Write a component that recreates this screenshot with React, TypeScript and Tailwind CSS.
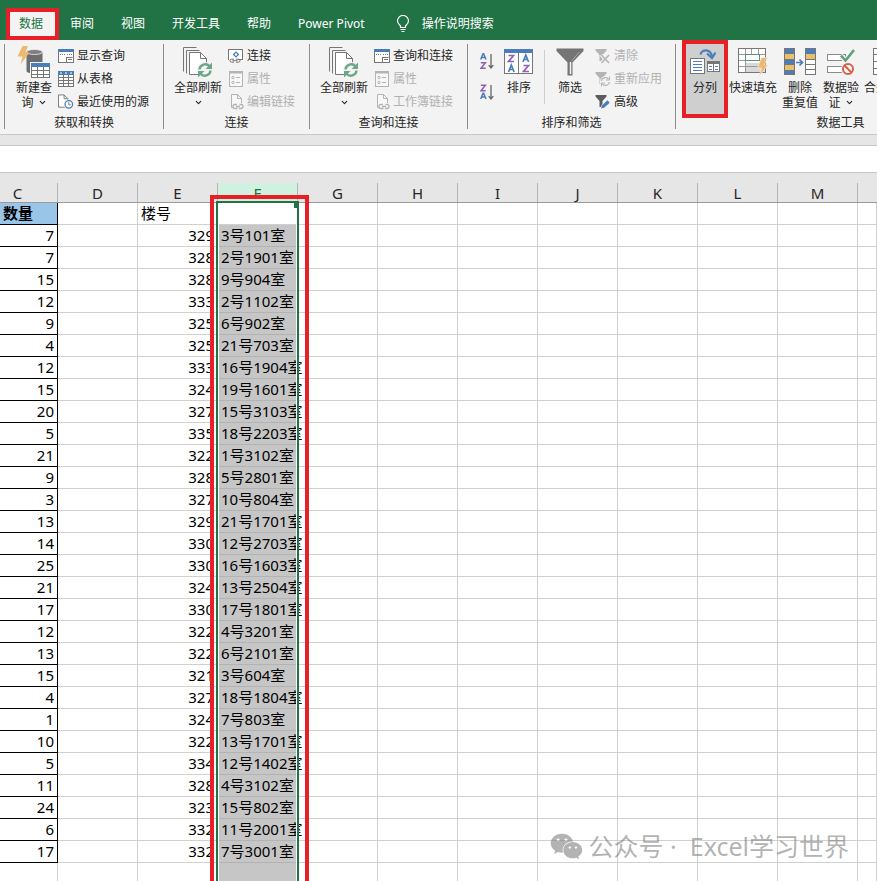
import React from 'react';
import { ChevronDown } from 'lucide-react';
import { FaWeixin } from 'react-icons/fa';

const BLUE = '#4a7ebb';
const GRAY = '#767676';
const MUTED = '#b4b4b4';

const TABS = ['审阅', '视图', '开发工具', '帮助', 'Power Pivot'];

const COLUMNS = ['C', 'D', 'E', 'F', 'G', 'H', 'I', 'J', 'K', 'L', 'M'];
const EMPTY_COLUMNS = ['G', 'H', 'I', 'J', 'K', 'L', 'M'];

const ROWS: [number, number, string][] = [
  [7, 329, '3号101室'],
  [7, 328, '2号1901室'],
  [15, 328, '9号904室'],
  [12, 333, '2号1102室'],
  [9, 325, '6号902室'],
  [4, 325, '21号703室'],
  [12, 333, '16号1904室'],
  [15, 324, '19号1601室'],
  [20, 327, '15号3103室'],
  [5, 335, '18号2203室'],
  [21, 322, '1号3102室'],
  [9, 328, '5号2801室'],
  [3, 327, '10号804室'],
  [13, 329, '21号1701室'],
  [14, 330, '12号2703室'],
  [25, 330, '16号1603室'],
  [21, 324, '13号2504室'],
  [17, 330, '17号1801室'],
  [12, 322, '4号3201室'],
  [13, 322, '6号2101室'],
  [15, 321, '3号604室'],
  [4, 327, '18号1804室'],
  [1, 324, '7号803室'],
  [10, 322, '13号1701室'],
  [5, 334, '12号1402室'],
  [11, 328, '4号3102室'],
  [24, 323, '15号802室'],
  [6, 332, '11号2001室'],
  [17, 332, '7号3001室'],
];

/* ---------- icons ---------- */

const BulbIcon = () => (
  <svg width="14" height="18" viewBox="0 0 14 18" fill="none" stroke="#fff" strokeWidth="1.2">
    <path d="M4.5 12.5V11C3 9.5 1.5 8.300 1.500 6a5.500 5.500 0 0 1 11 0c0 2.300-1.500 3.500-3 5v1.500z" />
    <path d="M4.500 14.500h5M5.500 16.500h3" />
  </svg>
);

const NewQueryIcon = () => (
  <svg width="36" height="34" viewBox="0 0 36 34">
    <path d="M10.500 7v19c0 1.500 3.500 2.500 8 2.500s8-1 8-2.500V7z" fill="#6d6d6d" />
    <ellipse cx="18.500" cy="7" rx="8" ry="2.500" fill="#7e7e7e" stroke="#f3f3f3" strokeWidth="0.800" />
    <path d="M6.500 1H12L9.500 7.500h4L4.500 19.500l2-8h-5z" fill="#ebb970" />
    <rect x="14" y="17" width="22" height="17" fill="#f3f3f3" />
    <rect x="15.500" y="18.500" width="18" height="14" fill="#fff" stroke={GRAY} />
    <rect x="15" y="18" width="19" height="4" fill={BLUE} />
    <path d="M21.500 22v10M27.500 22v10M16 25.500h17M16 29.500h17" stroke={GRAY} />
  </svg>
);

const PaneIcon = () => (
  <svg width="16" height="14" viewBox="0 0 16 14">
    <rect x="0.500" y="0.500" width="15" height="13" fill="#fff" stroke={GRAY} />
    <rect width="16" height="3" fill={BLUE} />
    <path d="M2 5.500h5M9 5.500h5" stroke={GRAY} strokeDasharray="1 1" />
    <path d="M8.500 8.500h6M8.500 8v5M10 10.500h4" stroke={GRAY} />
  </svg>
);

const TableIcon = () => (
  <svg width="16" height="16" viewBox="0 0 16 16">
    <rect x="0.500" y="0.500" width="15" height="15" fill="#fff" stroke={GRAY} />
    <rect width="16" height="4" fill={BLUE} />
    <path d="M2 2h2M7 2h2M12 2h2" stroke="#fff" />
    <path d="M5.500 4v11M10.500 4v11M1 6.500h14M1 9.500h14M1 12.500h14" stroke={GRAY} />
  </svg>
);

const RecentIcon = () => (
  <svg width="17" height="16" viewBox="0 0 17 16">
    <path d="M0.500 0.500h6l4 4v9h-10z" fill="#fff" stroke={GRAY} />
    <path d="M6.500 0.500v4h4" fill="none" stroke={GRAY} />
    <circle cx="11.500" cy="10.500" r="5.500" fill="#f3f3f3" />
    <circle cx="11.500" cy="10.500" r="4" fill="#fff" stroke={BLUE} strokeWidth="1.300" />
    <path d="M11.500 8v3h2.200" fill="none" stroke={GRAY} />
  </svg>
);

const RefreshAllIcon = () => (
  <svg width="30" height="31" viewBox="0 0 30 31" fill="none">
    <path d="M0.500 24.500v-24h13M3.500 26.500v-23h13" stroke={GRAY} />
    <path d="M6.500 5.500h11l6 6v16h-17z" fill="#fff" stroke={GRAY} />
    <path d="M17.500 5.500v6h6" stroke={GRAY} />
    <circle cx="22" cy="23" r="8" fill="#f3f3f3" />
    <path d="M16.500 22.500a5.700 5.700 0 0 1 10-3.200M27.500 23.500a5.700 5.700 0 0 1-10 3.200" stroke="#6ba58a" strokeWidth="2.400" />
    <path d="M29 15.500v6.500h-6.500zM15 30.500V24h6.500z" fill="#6ba58a" />
  </svg>
);

const ConnectionIcon = () => (
  <svg width="16" height="14" viewBox="0 0 16 14" fill="none">
    <rect x="0.500" y="0.500" width="14" height="10" fill="#fff" stroke={GRAY} />
    <path d="M8 2.200l3.300 3.300L8 8.800 4.700 5.500z" fill={BLUE} />
    <circle cx="8" cy="5.500" r="1.200" fill="#fff" />
    <path d="M1 11h9" stroke="#f3f3f3" strokeWidth="2" />
    <path d="M6 13.200H3.500a1.500 1.500 0 0 1 0-3H6M8 10.200h2.500a1.500 1.500 0 0 1 0 3H8M4.500 11.700h5" stroke={GRAY} />
  </svg>
);

const PropertiesIcon = () => (
  <svg width="16" height="16" viewBox="0 0 16 16" fill="none">
    <rect x="1.500" y="0.500" width="13" height="15" fill="#f7f7f7" stroke={MUTED} />
    <path d="M1 1.500h14" stroke={MUTED} strokeWidth="2" />
    <circle cx="5" cy="6.500" r="1.200" stroke={MUTED} />
    <circle cx="5" cy="11.500" r="1.200" stroke={MUTED} />
    <path d="M8 6.500h4M8 11.500h4" stroke={MUTED} />
  </svg>
);

const DocLinkIcon = () => (
  <svg width="16" height="16" viewBox="0 0 16 16" fill="none">
    <path d="M5 13.500H3.500v-13h6l4 4V9" fill="#f7f7f7" stroke={MUTED} />
    <path d="M9.500 0.500v4h4" stroke={MUTED} />
    <path d="M9.500 14.500H7a2 2 0 0 1 0-4h2M11.500 10.500H13a2 2 0 0 1 0 4h-2M8 12.500h4" stroke={MUTED} strokeWidth="1.300" />
  </svg>
);

const SortIcon = ({ desc = false }: { desc?: boolean }) => {
  const a = { d: 'M0.700 6.500L3 0.700h0.600L6 6.500M1.600 4.500h3.500', stroke: BLUE };
  const z = { d: 'M0.800 1.200h4.600L1 6.800h4.700', stroke: '#9161b5' };
  const [top, bottom] = desc ? [z, a] : [a, z];
  return (
    <svg width="14" height="17" viewBox="0 0 14 17" fill="none" strokeWidth="1.500">
      <path {...top} />
      <path {...bottom} transform="translate(0 8.500)" />
      <path d="M11 1v14M8.700 12.200L11 15l2.300-2.800" stroke="#666" strokeWidth="1.300" />
    </svg>
  );
};

const SortDialogIcon = () => (
  <svg width="30" height="26" viewBox="0 0 30 26" fill="none">
    <rect x="0.500" y="0.500" width="28" height="24" fill="#fff" stroke={GRAY} />
    <rect width="29" height="4" fill={BLUE} />
    <path d="M14.500 4v21" stroke={GRAY} />
    <g strokeWidth="1.700">
      <path d="M4.500 6.500h5l-5 6h5.500M19.500 16.500h5l-5 6H25" stroke="#9161b5" />
      <path d="M4.500 23l2.800-7 2.800 7M5.500 20.500h3.600M19 13l2.800-7 2.800 7M20 10.500h3.600" stroke={BLUE} />
    </g>
  </svg>
);

const FilterIcon = () => (
  <svg width="30" height="28" viewBox="-1 0 30 28">
    <path d="M0.500 0.500h27v2.500L16.500 14.500v13h-5v-13L0.500 3z" fill="#757575" />
    <path d="M14.500 14v12" stroke="#f3f3f3" strokeWidth="1.500" />
    <path d="M23.500 4L15.500 13" stroke="#a5a5a5" />
  </svg>
);

const SmallFilterIcon = ({ kind }: { kind: 'clear' | 'reapply' | 'advanced' }) => (
  <svg width="16" height="16" viewBox="0 0 16 16" fill="none">
    <path d="M0.500 1h11v1.500l-4 4.500v6h-3V7l-4-4.500z" fill={kind === 'advanced' ? '#5c5c5c' : MUTED} />
    {kind === 'clear' && (
      <>
        <path d="M6 7l8 8M14 7l-8 8" stroke="#f3f3f3" strokeWidth="3" />
        <path d="M6.500 7l7.500 8M14 7l-7.500 8" stroke={MUTED} strokeWidth="1.500" />
      </>
    )}
    {kind === 'reapply' && (
      <>
        <circle cx="10.500" cy="10.500" r="5.500" fill="#f3f3f3" />
        <path d="M6.500 10a4 4 0 0 1 7-2M14.500 11a4 4 0 0 1-7 2" stroke={MUTED} strokeWidth="1.300" />
        <path d="M14.500 5.500v3.500H11M6.500 15.500V12H10" stroke={MUTED} />
      </>
    )}
    {kind === 'advanced' && (
      <>
        <path d="M5 15l1.500-4L12 5.500 15 8.500 9 14z" fill="#f3f3f3" />
        <path d="M6 14.500l1-3.200 5.500-5 2.200 2.400-5.500 5z" fill={BLUE} />
      </>
    )}
  </svg>
);

const TextToColumnsIcon = () => (
  <svg width="32" height="28" viewBox="0 0 32 28" fill="none">
    <path d="M11.500 6.500c1-5.500 10.500-6.500 11.500 2.500" stroke={BLUE} strokeWidth="2.200" />
    <path d="M18 5.500l5 4.500L26.500 4.500" stroke={BLUE} strokeWidth="2.200" />
    <rect x="1.500" y="10.500" width="14" height="15" fill="#fff" stroke={GRAY} />
    <path d="M4 13.500h9M4 16.500h9M4 19.500h9M4 22.500h9" stroke={BLUE} />
    <rect x="18.500" y="13.500" width="12" height="10" fill="#fff" stroke={GRAY} />
    <rect x="18" y="13" width="13" height="3" fill={GRAY} />
    <path d="M24.500 16v7" stroke={GRAY} />
    <path d="M20 18.500h3M26 18.500h3M20 21.500h3M26 21.500h3" stroke={BLUE} />
  </svg>
);

const FlashFillIcon = () => (
  <svg width="32" height="30" viewBox="0 0 32 30" fill="none">
    <rect x="1.500" y="1.500" width="27" height="24" fill="#fff" stroke={GRAY} />
    <rect x="8" y="16" width="20" height="9" fill="#d8d8d8" />
    <path d="M8.500 2v5M8.500 14v11M14.500 2v5M21.500 2v5M2 7.500h26M2 13.500h26M2 19.500h26" stroke="#9a9a9a" />
    <rect x="8.500" y="7.500" width="14" height="6" fill="#fff" stroke="#5b9279" />
    <path d="M24.500 10.500h6l-3 7.500h3.500L22 29.500l2.500-8.500h-4z" fill="#ebb970" stroke="#f3f3f3" strokeWidth="0.600" />
  </svg>
);

const RemoveDuplicatesIcon = () => (
  <svg width="34" height="28" viewBox="0 0 34 28" fill="none">
    <rect x="1.500" y="0.500" width="10" height="26" fill={BLUE} stroke={GRAY} />
    <path d="M2 8.500h9M2 19.500h9" stroke="#e9bf6b" strokeWidth="5" />
    <path d="M2 5.500h9M2 11.500h9M2 16.500h9M2 22.500h9" stroke={GRAY} />
    <path d="M13 14.500h6M16.500 11.500l3 3-3 3" stroke={BLUE} strokeWidth="1.700" />
    <rect x="22.500" y="0.500" width="10" height="26" fill="#fff" stroke={GRAY} />
    <rect x="23" y="1" width="9" height="5" fill={BLUE} />
    <rect x="23" y="6" width="9" height="5" fill="#e9bf6b" />
    <path d="M23 11.500h9M23 16.500h9M23 21.500h9" stroke={GRAY} />
  </svg>
);

const ValidationIcon = () => (
  <svg width="30" height="28" viewBox="0 0 30 28" fill="none">
    <rect x="1.500" y="6.500" width="18" height="6" fill="#fff" stroke="#8a8a8a" />
    <rect x="1.500" y="18.500" width="18" height="6" fill="#fff" stroke="#8a8a8a" />
    <path d="M14.500 7.500l5 5L28.500 2" stroke="#f3f3f3" strokeWidth="5" />
    <path d="M15 7.500l4.500 5L28 2" stroke="#5c9f83" strokeWidth="2.600" />
    <circle cx="22" cy="21" r="7" fill="#f3f3f3" />
    <circle cx="22" cy="21" r="5" fill="#fff" stroke="#d95f43" strokeWidth="2" />
    <path d="M18.500 17.500l7 7" stroke="#d95f43" strokeWidth="2" />
  </svg>
);

const ConsolidateIcon = () => (
  <svg width="30" height="28" viewBox="0 0 30 28" fill="none">
    <rect x="0.500" y="0.500" width="12" height="26" fill="#fff" stroke={GRAY} />
    <path d="M1 6.500h11M1 13.500h11M1 20.500h11" stroke={GRAY} />
  </svg>
);

/* ---------- ribbon parts ---------- */

const Group: React.FC<{ title: string; className: string; children: React.ReactNode }> = ({ title, className, children }) => (
  <section className={`flex shrink-0 flex-col border-l border-[#8c8c8c] ${className}`}>
    <div className="flex h-[70px]">{children}</div>
    <h2 className="mt-[3px] text-center text-xs leading-3">{title}</h2>
  </section>
);

interface BigButtonProps {
  icon: React.ReactNode;
  label: string;
  second?: string;
  arrow?: boolean;
  className?: string;
}

const BigButton: React.FC<BigButtonProps> = ({ icon, label, second, arrow, className = '' }) => (
  <button type="button" className={`flex shrink-0 flex-col items-center whitespace-nowrap leading-[15px] ${className}`}>
    <span className="flex h-9 items-center justify-center">{icon}</span>
    <span>{label}</span>
    <span className="flex h-[15px] items-center gap-1">
      {second}
      {arrow && <ChevronDown size={9} strokeWidth={3} />}
    </span>
  </button>
);

const SmallButton: React.FC<{ icon: React.ReactNode; label: string; disabled?: boolean }> = ({ icon, label, disabled }) => (
  <button type="button" disabled={disabled} className="flex h-[23px] items-center gap-[3px] whitespace-nowrap disabled:text-[#b1b1b1]">
    <span className="flex w-4">{icon}</span>
    <span>{label}</span>
  </button>
);

const Ribbon = () => (
  <div className="flex h-[95px] overflow-hidden border-b border-[#c8c8c8] bg-[#f3f3f3] pt-1 pb-[5px] pl-1 text-xs text-[#262626]">
    <Group title="获取和转换" className="w-[159px]">
      <div className="flex gap-[6px] pl-[11px]">
        <BigButton icon={<NewQueryIcon />} label="新建查" second="询" arrow />
        <div>
          <SmallButton icon={<PaneIcon />} label="显示查询" />
          <SmallButton icon={<TableIcon />} label="从表格" />
          <SmallButton icon={<RecentIcon />} label="最近使用的源" />
        </div>
      </div>
    </Group>
    <Group title="连接" className="w-[146px]">
      <div className="flex gap-[6px] pl-[10px]">
        <BigButton icon={<RefreshAllIcon />} label="全部刷新" arrow />
        <div>
          <SmallButton icon={<ConnectionIcon />} label="连接" />
          <SmallButton icon={<PropertiesIcon />} label="属性" disabled />
          <SmallButton icon={<DocLinkIcon />} label="编辑链接" disabled />
        </div>
      </div>
    </Group>
    <Group title="查询和连接" className="w-[158px]">
      <div className="flex gap-[6px] pl-[10px]">
        <BigButton icon={<RefreshAllIcon />} label="全部刷新" arrow />
        <div>
          <SmallButton icon={<PaneIcon />} label="查询和连接" />
          <SmallButton icon={<PropertiesIcon />} label="属性" disabled />
          <SmallButton icon={<DocLinkIcon />} label="工作簿链接" disabled />
        </div>
      </div>
    </Group>
    <Group title="排序和筛选" className="w-[208px]">
      <div className="flex gap-[10px] pl-3">
        <div className="flex flex-col gap-[14px] pt-[9px]">
          <button type="button" aria-label="升序"><SortIcon /></button>
          <button type="button" aria-label="降序"><SortIcon desc /></button>
        </div>
        <BigButton icon={<SortDialogIcon />} label="排序" />
        <div className="mt-[6px] h-[54px] w-px bg-[#cfcfcf]" />
        <BigButton icon={<FilterIcon />} label="筛选" />
        <div>
          <SmallButton icon={<SmallFilterIcon kind="clear" />} label="清除" disabled />
          <SmallButton icon={<SmallFilterIcon kind="reapply" />} label="重新应用" disabled />
          <SmallButton icon={<SmallFilterIcon kind="advanced" />} label="高级" />
        </div>
      </div>
    </Group>
    <Group title="数据工具" className="w-[330px]">
      <div className="flex gap-[5px] pl-[10px]">
        <BigButton icon={<TextToColumnsIcon />} label="分列" className="w-[38px] bg-[#cfcfcf] ring-4 ring-[#e71f26]" />
        <BigButton icon={<FlashFillIcon />} label="快速填充" />
        <BigButton icon={<RemoveDuplicatesIcon />} label="删除" second="重复值" />
        <BigButton icon={<ValidationIcon />} label="数据验" second="证" arrow />
        <BigButton icon={<ConsolidateIcon />} label="合并计算" />
      </div>
    </Group>
  </div>
);

/* ---------- sheet ---------- */

const cell = 'border-r border-b border-[#d0d0d0] p-0';
const boxedCell = 'border-r border-b border-black p-0';

const Sheet = () => (
  <div className="relative flex-1 overflow-hidden bg-white">
    <table className="w-full table-fixed border-separate border-spacing-0 text-[15px] leading-[21px] whitespace-nowrap text-black">
      <colgroup>
        <col className="w-[58px]" />
        {COLUMNS.slice(1).map((c) => (
          <col key={c} className="w-20" />
        ))}
        <col />
      </colgroup>
      <thead>
        <tr className="h-[30px] bg-[#e6e6e6]">
          {COLUMNS.map((c) => (
            <th key={c} scope="col" className="border-b border-[#9b9b9b] p-0 pt-[10px] font-normal">
              <div
                className={`h-[19px] border-r border-[#b5b5b5] leading-5 ${c === 'F' ? 'bg-[#d0f0e0] text-[#217346]' : 'text-[#262626]'} ${c === 'C' ? 'pr-[22px]' : ''}`}
              >
                {c}
              </div>
            </th>
          ))}
          <th className="border-b border-[#9b9b9b] p-0" />
        </tr>
      </thead>
      <tbody>
        <tr className="h-[22px]">
          <td className={`${boxedCell} bg-[#99c5e9] pl-[3px] font-bold`}>数量</td>
          <td className={cell} />
          <td className={`${cell} pl-[3px]`}>楼号</td>
          <td className={cell} />
          {EMPTY_COLUMNS.map((c) => (
            <td key={c} className={cell} />
          ))}
          <td className={cell} />
        </tr>
        {ROWS.map(([count, building, room], i) => (
          <tr key={i} className="h-[22px]">
            <td className={`${boxedCell} pr-[3px] text-right`}>{count}</td>
            <td className={cell} />
            <td className={`${cell} pr-[3px] text-right`}>{building}</td>
            <td className="border-r border-b border-[#b3b3b3] bg-[#c6c6c6] p-0 pl-[3px]">{room}</td>
            {EMPTY_COLUMNS.map((c) => (
              <td key={c} className={cell} />
            ))}
            <td className={cell} />
          </tr>
        ))}
        <tr className="h-[22px]">
          <td className={cell} />
          <td className={cell} />
          <td className={cell} />
          <td className="border-r border-b border-[#b3b3b3] bg-[#c6c6c6] p-0" />
          {EMPTY_COLUMNS.map((c) => (
            <td key={c} className={cell} />
          ))}
          <td className={cell} />
        </tr>
      </tbody>
    </table>

    {/* active range of column F */}
    <div className="pointer-events-none absolute top-7 -bottom-2 left-[216px] w-[83px] border-2 border-[#217346] inset-ring inset-ring-white">
      <span className="absolute -top-px -right-[2px] h-[6px] w-[5px] bg-[#217346]" />
    </div>
    <div className="pointer-events-none absolute top-[22px] -bottom-2 left-[210px] w-[99px] border-4 border-[#e71f26]" />

    <div className="pointer-events-none absolute right-7 bottom-4 flex items-center gap-[6px] text-[25px] text-[#808080]/60">
      <FaWeixin size={33} />
      <span className="whitespace-pre">公众号 ·  Excel学习世界</span>
    </div>
  </div>
);

const App: React.FC = () => {
  return (
    <div className="flex h-screen flex-col overflow-hidden bg-[#e6e6e6] font-['Noto_Sans','Noto_Sans_CJK_SC',sans-serif]">
      <nav className="flex h-10 shrink-0 items-end bg-[#217346] pl-[6px] text-xs whitespace-nowrap text-white">
        <button type="button" className="h-8 w-[53px] border-4 border-[#e71f26] bg-[#f3f3f3] pl-[9px] text-left text-[#217346]">
          数据
        </button>
        <div className="flex h-8 items-center gap-[27px] pl-[11px]">
          {TABS.map((tab) => (
            <button key={tab} type="button">{tab}</button>
          ))}
          <button type="button" className="flex items-center gap-3 pl-1">
            <BulbIcon />
            操作说明搜索
          </button>
        </div>
      </nav>
      <Ribbon />
      <input
        type="text"
        aria-label="编辑栏"
        className="mt-[10px] h-7 w-full shrink-0 border-y border-[#c6c6c6] bg-white px-2 text-[15px] outline-none"
      />
      <Sheet />
    </div>
  );
};

export default App;
